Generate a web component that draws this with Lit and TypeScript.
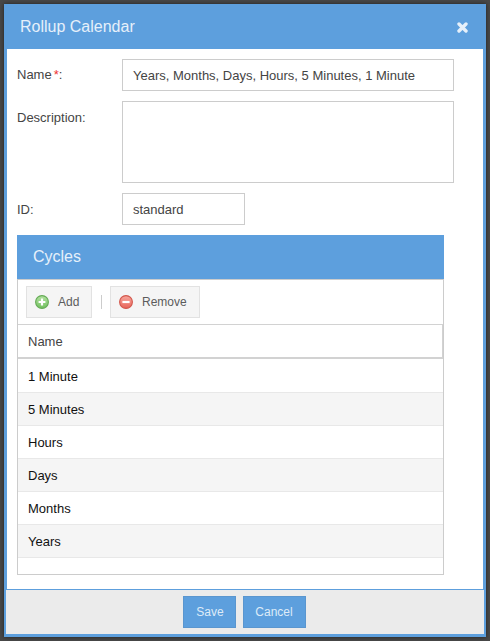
import { LitElement, html, css } from "lit";
import { customElement } from "lit/decorators.js";

@customElement("app-root")
export class AppRoot extends LitElement {
  static styles = css`
    :host {
      display: block;
      width: 490px;
      height: 641px;
      background: #484848;
      font-family: "Liberation Sans", Arial, sans-serif;
      font-size: 13px;
      color: #444;
      box-sizing: border-box;
      padding: 4px;
      overflow: hidden;
    }
    * { box-sizing: border-box; }
    .modal {
      width: 482px;
      height: 633px;
      border: solid #5d9fdd;
      border-width: 0 3px 3px 3px;
      background: #fff;
      display: flex;
      flex-direction: column;
      box-shadow: 0 0 4px #222;
    }
    .title {
      height: 45px;
      margin: 0 -3px;
      background: #5d9fdd;
      color: #e6f0fa;
      display: flex;
      justify-content: space-between;
      align-items: center;
      padding: 0 18px 0 16px;
      font-size: 16px;
      flex: none;
    }
    .title svg { display: block; margin-top: 1px; }
    .body {
      flex: 1;
      min-height: 0;
      padding: 10px 10px 14px 10px;
      display: flex;
      flex-direction: column;
      gap: 10px;
    }
    .row { display: grid; grid-template-columns: 105px auto; justify-content: start; }
    .label { padding-top: 9px; line-height: 15px; }
    .label.first { padding-top: 8px; }
    .req { color: #e33; margin-left: 2px; }
    .field {
      border: 1px solid #ccc;
      height: 32px;
      padding: 0 10px;
      display: flex;
      align-items: center;
      background: #fff;
      white-space: nowrap;
    }
    .name { width: 332px; }
    .desc { width: 332px; height: 82px; }
    .id { width: 123px; }
    .panel {
      width: 427px;
      flex: 1;
      min-height: 0;
      display: flex;
      flex-direction: column;
      border: 1px solid #ccc;
      border-top: 0;
    }
    .phead {
      height: 44px;
      margin: 0 -1px;
      background: #5d9fdd;
      color: #e6f0fa;
      font-size: 16px;
      display: flex;
      align-items: center;
      padding-left: 16px;
      flex: none;
    }
    .toolbar {
      height: 45px;
      flex: none;
      display: flex;
      align-items: center;
      padding: 0 8px;
      border-top: 1px solid #ccc;
    }
    .btn {
      height: 32px;
      display: flex;
      align-items: center;
      border: 1px solid #e2e2e2;
      background: #f5f5f5;
      color: #5c5c5c;
      font-size: 12px;
      gap: 9px;
      padding: 0 8px;
    }
    .add { width: 66px; }
    .remove { width: 90px; }
    .sep { width: 1px; height: 14px; background: #ccc; margin: 0 8px 0 9px; }
    .thead {
      height: 35px;
      flex: none;
      display: flex;
      align-items: center;
      padding-left: 10px;
      border: solid #d2d2d2;
      border-width: 1px 1px 2px 0;
      margin-bottom: 1px;
      color: #444;
    }
    .tr {
      height: 33px;
      flex: none;
      display: flex;
      align-items: center;
      padding-left: 10px;
      border-bottom: 1px solid #e8e8e8;
      color: #111;
    }
    .tr.alt { background: #f5f5f5; }
    .footer {
      flex: none;
      height: 45px;
      margin: 0 -1px;
      background: #ebebeb;
      border-top: 1px solid #5d9fdd;
      display: flex;
      justify-content: center;
      align-items: center;
      gap: 7px;
      padding-right: 2px;
    }
    .fbtn {
      height: 32px;
      display: flex;
      align-items: center;
      justify-content: center;
      background: #5d9fdd;
      border: 1px solid #5a96cf;
      color: #deebf8;
      font-size: 12px;
    }
    .save { width: 53px; padding-left: 2px; }
    .cancel { width: 63px; }
  `;

  private cycles = ["1 Minute", "5 Minutes", "Hours", "Days", "Months", "Years"];

  render() {
    return html`
      <div class="modal">
        <div class="title">
          <span>Rollup Calendar</span>
          <svg width="11" height="11" viewBox="0 0 11 11">
            <path d="M2 2 L9 9 M9 2 L2 9" stroke="#e6f0fa" stroke-width="3.4" stroke-linecap="round" fill="none" />
          </svg>
        </div>
        <div class="body">
          <div class="row">
            <div class="label first">Name<span class="req">*</span>:</div>
            <div class="field name">Years, Months, Days, Hours, 5 Minutes, 1 Minute</div>
          </div>
          <div class="row">
            <div class="label">Description:</div>
            <div class="field desc"></div>
          </div>
          <div class="row">
            <div class="label">ID:</div>
            <div class="field id">standard</div>
          </div>
          <div class="panel">
            <div class="phead">Cycles</div>
            <div class="toolbar">
              <div class="btn add">
                <svg width="14" height="14" viewBox="0 0 14 14">
                  <defs>
                    <linearGradient id="g" x1="0" y1="0" x2="0" y2="1">
                      <stop offset="0%" stop-color="#b4e2a2" />
                      <stop offset="100%" stop-color="#72c05f" />
                    </linearGradient>
                  </defs>
                  <circle cx="7" cy="7" r="6.4" fill="url(#g)" stroke="#64ab55" stroke-width="1.1" />
                  <path d="M7 3.6 V10.4 M3.6 7 H10.4" stroke="#fff" stroke-width="2.2" />
                </svg>
                <span>Add</span>
              </div>
              <div class="sep"></div>
              <div class="btn remove">
                <svg width="14" height="14" viewBox="0 0 14 14">
                  <defs>
                    <linearGradient id="r" x1="0" y1="0" x2="0" y2="1">
                      <stop offset="0%" stop-color="#f7a79e" />
                      <stop offset="100%" stop-color="#e8655a" />
                    </linearGradient>
                  </defs>
                  <circle cx="7" cy="7" r="6.4" fill="url(#r)" stroke="#d2574c" stroke-width="1.1" />
                  <path d="M3.4 7 H10.6" stroke="#fff" stroke-width="2.2" />
                </svg>
                <span>Remove</span>
              </div>
            </div>
            <div class="thead">Name</div>
            ${this.cycles.map(
              (c, i) => html`<div class="tr ${i % 2 ? "alt" : ""}">${c}</div>`
            )}
          </div>
        </div>
        <div class="footer">
          <div class="fbtn save">Save</div>
          <div class="fbtn cancel">Cancel</div>
        </div>
      </div>
    `;
  }
}
